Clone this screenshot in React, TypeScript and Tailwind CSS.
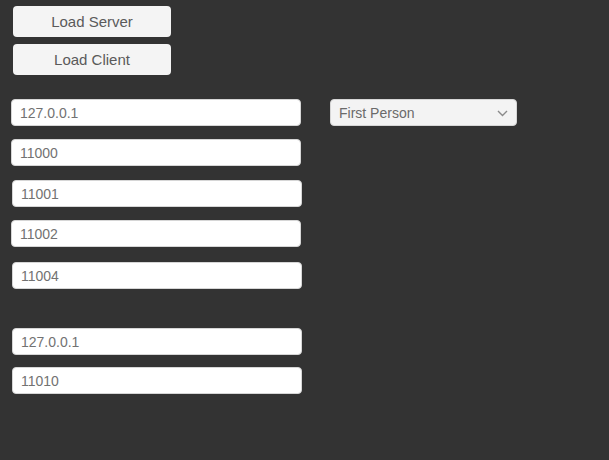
const font = { fontFamily: '"Liberation Sans", Arial, sans-serif' };

function Button({ label }: { label: string }) {
  return (
    <div className="flex h-[31px] w-[158px] items-center justify-center rounded-[4px] bg-[#f4f4f4] pt-[2px] text-[15px] text-[#5a5a5a]">
      {label}
    </div>
  );
}

function Field({ value, className = '' }: { value: string; className?: string }) {
  return (
    <div
      className={`flex h-[27px] w-[290px] items-center rounded-[4px] border border-[#d6d6d6] bg-white pl-[8px] pt-[1px] text-[14px] text-[#727272] ${className}`}
    >
      {value}
    </div>
  );
}

export default function App() {
  return (
    <div className="min-h-[460px] w-full bg-[#333333]" style={font}>
      <div className="flex flex-col pt-[6px]">
        {/* Load buttons */}
        <div className="ml-[13px] flex flex-col gap-[7px]">
          <Button label="Load Server" />
          <Button label="Load Client" />
        </div>

        {/* Address + camera mode */}
        <div className="mt-[24px] flex items-start gap-[29px] pl-[11px]">
          <Field value="127.0.0.1" />
          <div className="flex h-[27px] w-[187px] items-center justify-between rounded-[4px] border border-[#d6d6d6] bg-[#f3f3f3] pl-[8px] pr-[8px] pt-[1px] text-[14px] text-[#6a6a6a]">
            <span>First Person</span>
            <svg width="11" height="7" viewBox="0 0 11 7" fill="none">
              <path d="M1 1l4.5 4.5L10 1" stroke="#8a8a8a" strokeWidth="1.4" />
            </svg>
          </div>
        </div>

        <div className="flex flex-col">
          <Field value="11000" className="ml-[11px] mt-[13px]" />
          <Field value="11001" className="ml-[12px] mt-[14px]" />
          <Field value="11002" className="ml-[11px] mt-[13px]" />
          <Field value="11004" className="ml-[12px] mt-[15px]" />
          <Field value="127.0.0.1" className="ml-[12px] mt-[39px]" />
          <Field value="11010" className="ml-[12px] mt-[12px]" />
        </div>
      </div>
    </div>
  );
}
